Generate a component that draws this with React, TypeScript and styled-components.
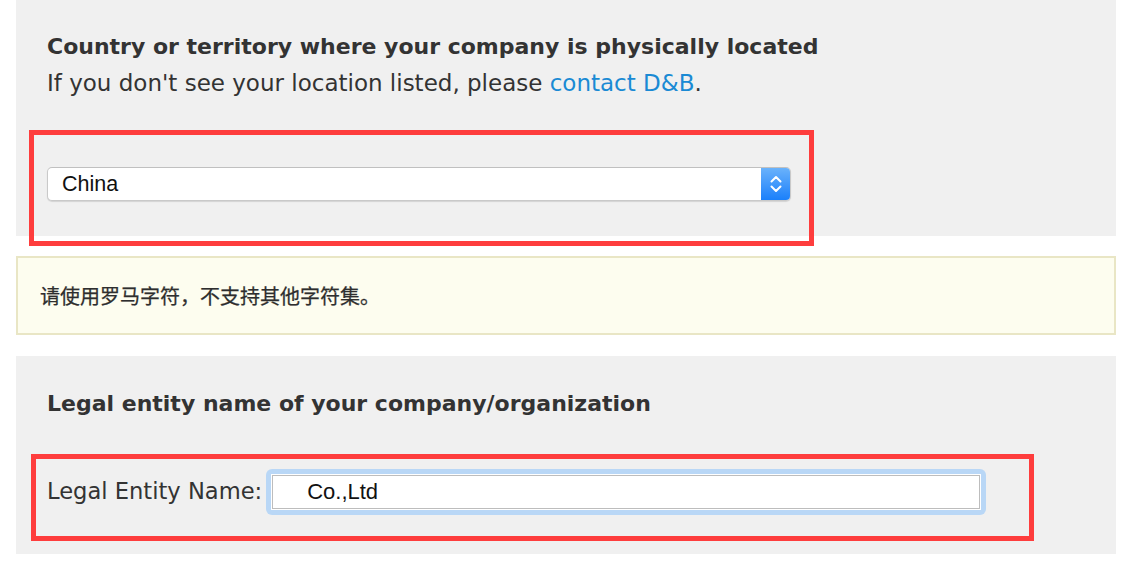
import React from 'react';
import styled, { createGlobalStyle } from 'styled-components';

const GlobalStyle = createGlobalStyle`
  html, body {
    margin: 0;
    padding: 0;
    background: #ffffff;
  }
  body {
    font-family: "DejaVu Sans", "Noto Sans CJK SC", sans-serif;
    color: #333333;
  }
`;

const Page = styled.div`
  padding: 0 30px 0 16px;
  display: flex;
  flex-direction: column;
`;

const Panel = styled.section<{ $top: number; $bottom: number }>`
  background: #f0f0f0;
  padding: ${(p) => p.$top}px 31px ${(p) => p.$bottom}px 31px;
  display: flex;
  flex-direction: column;
`;

const Heading = styled.h2`
  margin: 0;
  font-size: 22px;
  line-height: 36px;
  font-weight: bold;
  color: #333333;
  white-space: nowrap;
`;

const SubText = styled.p`
  margin: 0;
  font-size: 23px;
  line-height: 36px;
  color: #333333;
  white-space: nowrap;
`;

const Link = styled.a`
  color: #1a8ad4;
  text-decoration: none;
`;

const Annotation = styled.div<{ $width: number; $offset: number; $top: number; $overhang: number }>`
  box-sizing: border-box;
  width: ${(p) => p.$width}px;
  margin-left: ${(p) => p.$offset}px;
  margin-top: ${(p) => p.$top}px;
  margin-bottom: ${(p) => -p.$overhang}px;
  border: 5px solid #fe3d3d;
  display: flex;
  align-items: center;
`;

const SelectBox = styled.div`
  box-sizing: border-box;
  width: 744px;
  height: 34px;
  margin: 32px 0 40px 13px;
  background: #ffffff;
  border: 1px solid #c9c9c9;
  border-top-color: #c0c0c0;
  border-radius: 5px;
  box-shadow: 0 1px 1px rgba(0, 0, 0, 0.12);
  display: flex;
  align-items: center;
  overflow: hidden;
`;

const SelectValue = styled.span`
  flex: 1;
  padding-left: 14px;
  font-family: "Liberation Sans", Arial, sans-serif;
  font-size: 21.5px;
  color: #111111;
`;

const SelectArrows = styled.span`
  width: 29px;
  align-self: stretch;
  background: linear-gradient(#6ab2fb, #1b80fb);
  display: flex;
  align-items: center;
  justify-content: center;
`;

const Notice = styled.div`
  box-sizing: border-box;
  margin-top: 20px;
  margin-bottom: 21px;
  height: 79px;
  padding-left: 22px;
  background: #fdfdef;
  border: 2px solid #e9e6c5;
  display: flex;
  align-items: center;
  font-family: "Noto Sans CJK SC", sans-serif;
  font-size: 20px;
  color: #2e2e2e;
  -webkit-text-stroke: 0.25px #2e2e2e;
`;

const FieldRow = styled.div`
  display: flex;
  align-items: center;
  padding: 10px 0 21px 11px;
`;

const Label = styled.label`
  font-size: 22.6px;
  color: #333333;
  margin-right: 4px;
  padding-bottom: 2px;
  white-space: nowrap;
`;

const FocusRing = styled.span`
  display: flex;
  padding: 6px;
  background: #b9d7f6;
  border-radius: 6px;
`;

const TextInput = styled.input`
  box-sizing: border-box;
  width: 708px;
  height: 34px;
  margin: 0;
  padding: 0 0 0 34px;
  border: 1px solid #bdbdbd;
  outline: 1px solid #ffffff;
  background: #ffffff;
  font-family: "Liberation Sans", Arial, sans-serif;
  font-size: 22px;
  color: #111111;
`;

function Chevrons() {
  return (
    <svg width="14" height="20" viewBox="0 0 14 20" fill="none">
      <path d="M2.5 7.5 L7 3 L11.5 7.5" stroke="#ffffff" strokeWidth="2" strokeLinecap="round" strokeLinejoin="round" />
      <path d="M2.5 12.5 L7 17 L11.5 12.5" stroke="#ffffff" strokeWidth="2" strokeLinecap="round" strokeLinejoin="round" />
    </svg>
  );
}

export default function App() {
  return (
    <>
      <GlobalStyle />
      <Page>
        <Panel $top={29} $bottom={0}>
          <Heading>Country or territory where your company is physically located</Heading>
          <SubText>
            If you don't see your location listed, please <Link href="#">contact D&amp;B</Link>.
          </SubText>
          <Annotation $width={785} $offset={-18} $top={29} $overhang={10}>
            <SelectBox>
              <SelectValue>China</SelectValue>
              <SelectArrows>
                <Chevrons />
              </SelectArrows>
            </SelectBox>
          </Annotation>
        </Panel>

        <Notice>请使用罗马字符，不支持其他字符集。</Notice>

        <Panel $top={30} $bottom={13}>
          <Heading>Legal entity name of your company/organization</Heading>
          <Annotation $width={1003} $offset={-16} $top={32} $overhang={0}>
            <FieldRow>
              <Label>Legal Entity Name:</Label>
              <FocusRing>
                <TextInput defaultValue="Co.,Ltd" />
              </FocusRing>
            </FieldRow>
          </Annotation>
        </Panel>
      </Page>
    </>
  );
}
